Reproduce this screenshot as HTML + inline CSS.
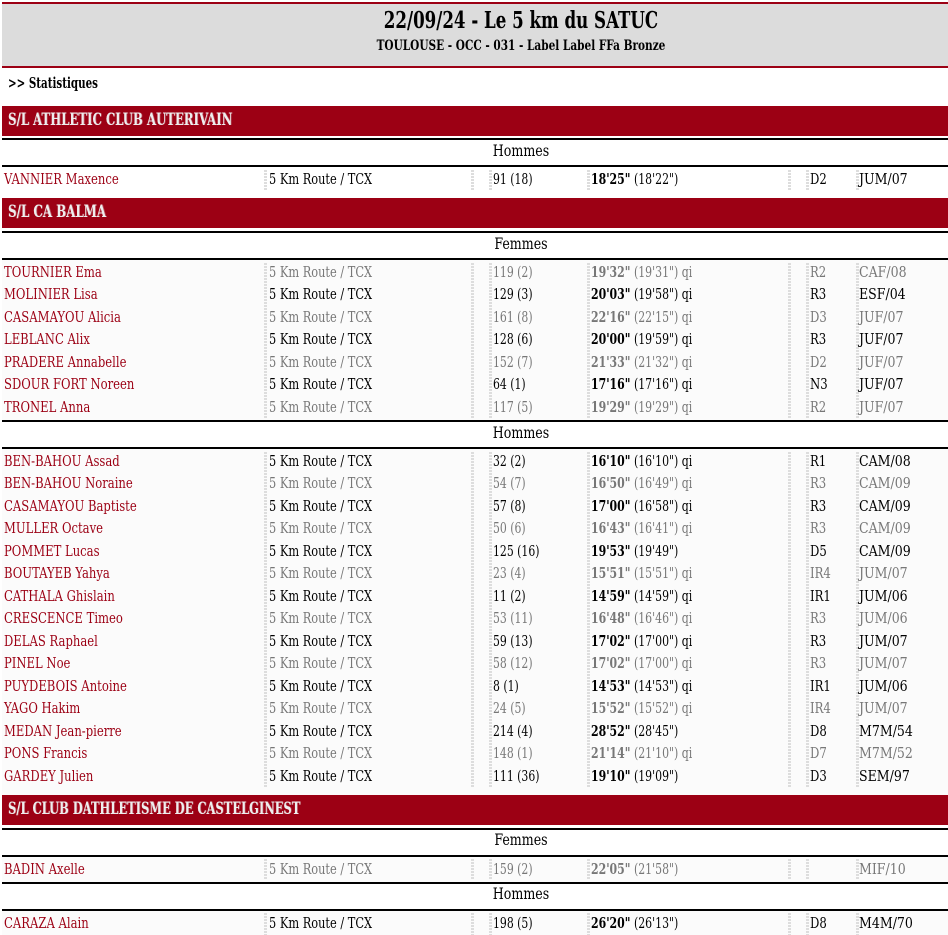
<!DOCTYPE html>
<html><head><meta charset="utf-8"><style>
html,body{margin:0;padding:0;background:#fff}
body{width:948px;height:935px;position:relative;overflow:hidden;font-family:"DejaVu Serif Condensed","DejaVu Serif","Liberation Serif",serif;font-stretch:condensed;font-size:15px;color:#000}
.a{position:absolute}
.bg{left:2px;right:0;background:#fbfbfb}
.hd{left:2px;top:2px;width:946px;height:62px;background:#dcdcdc;border-top:2px solid #9c0014;border-bottom:2px solid #9c0014}
.t1,.t2{left:0;width:1038px;text-align:center;font-weight:bold;white-space:nowrap}
.t1{top:4px;font-size:23px;line-height:26px;transform:scaleX(.805)}
.t2{top:34px;font-size:14px;line-height:16px;transform:scaleX(.835)}
.st{left:8px;top:75px;font-size:14.5px;line-height:18px;font-weight:bold;transform:scaleX(.79);transform-origin:0 0;white-space:nowrap}
.band{left:2px;width:946px;height:30px;background:#9c0014;color:#eee;font-weight:bold;font-size:17px;line-height:26px;white-space:nowrap}
.band i{position:absolute;left:6px;top:1px;font-style:normal;transform-origin:0 0;text-shadow:1px 0 0 rgba(238,238,238,.35)}
.l{left:2px;width:946px;height:2px;background:#000}
.sx{left:2px;text-align:center;width:1038px;font-size:16px;line-height:18px;transform:scaleX(.875)}
.dots{left:0;width:948px;background-image:repeating-linear-gradient(#ddd 0 2px,transparent 2px 3px),repeating-linear-gradient(#ddd 0 2px,transparent 2px 3px),repeating-linear-gradient(#ddd 0 2px,transparent 2px 3px),repeating-linear-gradient(#ddd 0 2px,transparent 2px 3px),repeating-linear-gradient(#ddd 0 2px,transparent 2px 3px),repeating-linear-gradient(#ddd 0 2px,transparent 2px 3px),repeating-linear-gradient(#ddd 0 2px,transparent 2px 3px);background-size:3px 100%;background-repeat:no-repeat;background-position:264px 0,471px 0,489px 0,587px 0,788px 0,806px 0,856px 0}
.r{position:absolute;left:0;width:948px;height:18px;line-height:18px;white-space:nowrap}
.r span{position:absolute;top:0;transform-origin:0 50%}
.r span:nth-child(1){left:4px;color:#9c0014;transform:scaleX(.86)}
.r span:nth-child(2){left:269px;transform:scaleX(.842)}
.r span:nth-child(3){left:493px;transform:scaleX(.805)}
.r span:nth-child(4){left:591px;transform:scaleX(.81)}
.r span:nth-child(5){left:810px;transform:scaleX(.866)}
.r span:nth-child(6){left:859px;transform:scaleX(.93)}
.g span:nth-child(n+2){color:#777}
</style></head><body>
<div class="a bg" style="top:260px;height:160px"></div>
<div class="a bg" style="top:449px;height:346px"></div>
<div class="a bg" style="top:857px;height:25px"></div>
<div class="a bg" style="top:911px;height:24px"></div>
<div class="a hd"><div class="a t1">22/09/24 - Le 5 km du SATUC</div><div class="a t2">TOULOUSE - OCC - 031 - Label Label FFa Bronze</div></div>
<div class="a st">&gt;&gt; Statistiques</div>

<div class="a band" style="top:106px"><i style="transform:scaleX(.765)">S/L ATHLETIC CLUB AUTERIVAIN</i></div>
<div class="a l" style="top:138px"></div>
<div class="a sx" style="top:142px">Hommes</div>
<div class="a l" style="top:165px"></div>
<div class="a dots" style="top:170px;height:21px"></div>
<div class="r" style="top:170px"><span>VANNIER Maxence</span><span>5 Km Route / TCX</span><span>91 (18)</span><span><b>18'25"</b> (18'22")</span><span>D2</span><span>JUM/07</span></div>

<div class="a band" style="top:198px"><i style="transform:scaleX(.775)">S/L CA BALMA</i></div>
<div class="a l" style="top:231px"></div>
<div class="a sx" style="top:235px">Femmes</div>
<div class="a l" style="top:258px"></div>
<div class="a dots" style="top:263px;height:155px"></div>
<div class="r g" style="top:263px"><span>TOURNIER Ema</span><span>5 Km Route / TCX</span><span>119 (2)</span><span><b>19'32"</b> (19'31") qi</span><span>R2</span><span>CAF/08</span></div>
<div class="r" style="top:285px"><span>MOLINIER Lisa</span><span>5 Km Route / TCX</span><span>129 (3)</span><span><b>20'03"</b> (19'58") qi</span><span>R3</span><span>ESF/04</span></div>
<div class="r g" style="top:308px"><span>CASAMAYOU Alicia</span><span>5 Km Route / TCX</span><span>161 (8)</span><span><b>22'16"</b> (22'15") qi</span><span>D3</span><span>JUF/07</span></div>
<div class="r" style="top:330px"><span>LEBLANC Alix</span><span>5 Km Route / TCX</span><span>128 (6)</span><span><b>20'00"</b> (19'59") qi</span><span>R3</span><span>JUF/07</span></div>
<div class="r g" style="top:353px"><span>PRADERE Annabelle</span><span>5 Km Route / TCX</span><span>152 (7)</span><span><b>21'33"</b> (21'32") qi</span><span>D2</span><span>JUF/07</span></div>
<div class="r" style="top:375px"><span>SDOUR FORT Noreen</span><span>5 Km Route / TCX</span><span>64 (1)</span><span><b>17'16"</b> (17'16") qi</span><span>N3</span><span>JUF/07</span></div>
<div class="r g" style="top:398px"><span>TRONEL Anna</span><span>5 Km Route / TCX</span><span>117 (5)</span><span><b>19'29"</b> (19'29") qi</span><span>R2</span><span>JUF/07</span></div>
<div class="a l" style="top:420px"></div>
<div class="a sx" style="top:424px">Hommes</div>
<div class="a l" style="top:447px"></div>
<div class="a dots" style="top:452px;height:335px"></div>
<div class="r" style="top:452px"><span>BEN-BAHOU Assad</span><span>5 Km Route / TCX</span><span>32 (2)</span><span><b>16'10"</b> (16'10") qi</span><span>R1</span><span>CAM/08</span></div>
<div class="r g" style="top:474px"><span>BEN-BAHOU Noraine</span><span>5 Km Route / TCX</span><span>54 (7)</span><span><b>16'50"</b> (16'49") qi</span><span>R3</span><span>CAM/09</span></div>
<div class="r" style="top:497px"><span>CASAMAYOU Baptiste</span><span>5 Km Route / TCX</span><span>57 (8)</span><span><b>17'00"</b> (16'58") qi</span><span>R3</span><span>CAM/09</span></div>
<div class="r g" style="top:519px"><span>MULLER Octave</span><span>5 Km Route / TCX</span><span>50 (6)</span><span><b>16'43"</b> (16'41") qi</span><span>R3</span><span>CAM/09</span></div>
<div class="r" style="top:542px"><span>POMMET Lucas</span><span>5 Km Route / TCX</span><span>125 (16)</span><span><b>19'53"</b> (19'49")</span><span>D5</span><span>CAM/09</span></div>
<div class="r g" style="top:564px"><span>BOUTAYEB Yahya</span><span>5 Km Route / TCX</span><span>23 (4)</span><span><b>15'51"</b> (15'51") qi</span><span>IR4</span><span>JUM/07</span></div>
<div class="r" style="top:587px"><span>CATHALA Ghislain</span><span>5 Km Route / TCX</span><span>11 (2)</span><span><b>14'59"</b> (14'59") qi</span><span>IR1</span><span>JUM/06</span></div>
<div class="r g" style="top:609px"><span>CRESCENCE Timeo</span><span>5 Km Route / TCX</span><span>53 (11)</span><span><b>16'48"</b> (16'46") qi</span><span>R3</span><span>JUM/06</span></div>
<div class="r" style="top:632px"><span>DELAS Raphael</span><span>5 Km Route / TCX</span><span>59 (13)</span><span><b>17'02"</b> (17'00") qi</span><span>R3</span><span>JUM/07</span></div>
<div class="r g" style="top:654px"><span>PINEL Noe</span><span>5 Km Route / TCX</span><span>58 (12)</span><span><b>17'02"</b> (17'00") qi</span><span>R3</span><span>JUM/07</span></div>
<div class="r" style="top:677px"><span>PUYDEBOIS Antoine</span><span>5 Km Route / TCX</span><span>8 (1)</span><span><b>14'53"</b> (14'53") qi</span><span>IR1</span><span>JUM/06</span></div>
<div class="r g" style="top:699px"><span>YAGO Hakim</span><span>5 Km Route / TCX</span><span>24 (5)</span><span><b>15'52"</b> (15'52") qi</span><span>IR4</span><span>JUM/07</span></div>
<div class="r" style="top:722px"><span>MEDAN Jean-pierre</span><span>5 Km Route / TCX</span><span>214 (4)</span><span><b>28'52"</b> (28'45")</span><span>D8</span><span>M7M/54</span></div>
<div class="r g" style="top:744px"><span>PONS Francis</span><span>5 Km Route / TCX</span><span>148 (1)</span><span><b>21'14"</b> (21'10") qi</span><span>D7</span><span>M7M/52</span></div>
<div class="r" style="top:767px"><span>GARDEY Julien</span><span>5 Km Route / TCX</span><span>111 (36)</span><span><b>19'10"</b> (19'09")</span><span>D3</span><span>SEM/97</span></div>

<div class="a band" style="top:795px"><i style="transform:scaleX(.75)">S/L CLUB DATHLETISME DE CASTELGINEST</i></div>
<div class="a l" style="top:828px"></div>
<div class="a sx" style="top:831px">Femmes</div>
<div class="a l" style="top:855px"></div>
<div class="a dots" style="top:859px;height:21px"></div>
<div class="r g" style="top:860px"><span>BADIN Axelle</span><span>5 Km Route / TCX</span><span>159 (2)</span><span><b>22'05"</b> (21'58")</span><span></span><span>MIF/10</span></div>
<div class="a l" style="top:882px"></div>
<div class="a sx" style="top:885px">Hommes</div>
<div class="a l" style="top:909px"></div>
<div class="a dots" style="top:913px;height:22px"></div>
<div class="r" style="top:914px"><span>CARAZA Alain</span><span>5 Km Route / TCX</span><span>198 (5)</span><span><b>26'20"</b> (26'13")</span><span>D8</span><span>M4M/70</span></div>
</body></html>
